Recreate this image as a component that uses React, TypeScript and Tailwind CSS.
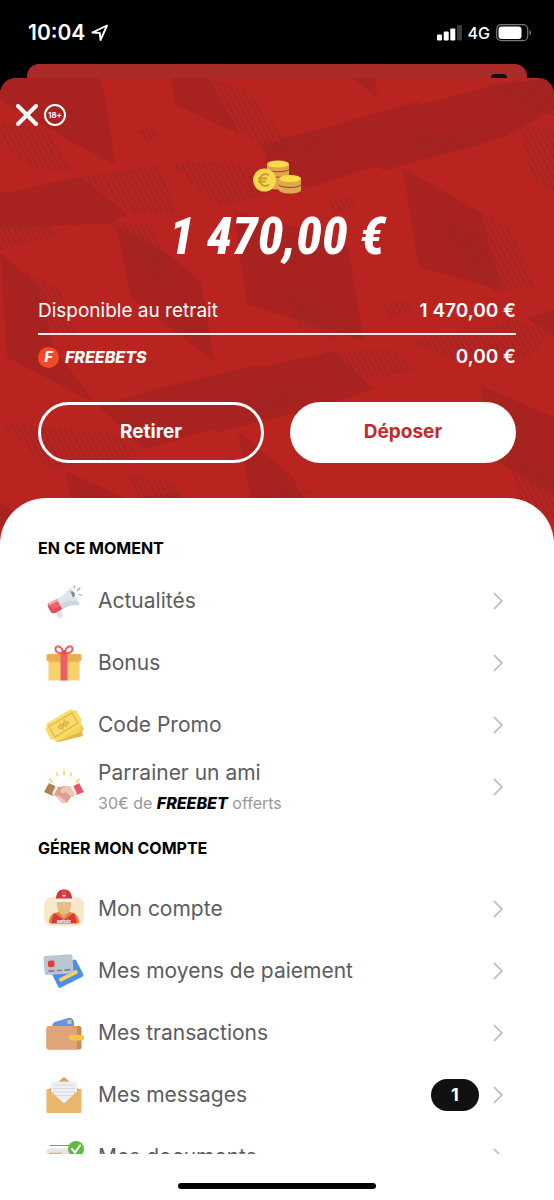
import type { ReactNode } from 'react';
import clsx from 'clsx';

interface MenuItem {
    label: string;
    icon: ReactNode;
    hint?: ReactNode;
    badge?: number;
}

interface MenuSection {
    title: string;
    items: MenuItem[];
}

function Icon({ children }: { children: ReactNode }) {
    return (
        <svg viewBox="0 0 40 40" className="h-10 w-10 shrink-0 overflow-visible" aria-hidden="true">
            {children}
        </svg>
    );
}

function MegaphoneIcon() {
    return (
        <Icon>
            <path d="M10 30l5.500-2.500 3 6.500a2.300 2.300 0 0 1-4.300 1.700z" fill="#d9e1ea" />
            <path d="M13 18C19 15 22 12 25 8c1-1.500 2.500-1 3 0l7 14c.7 1.400 0 2.500-1.500 2.300-6-.8-10 1-16 4.500z" fill="#dde4ec" />
            <path d="M15 23c8-3 12-4 18-3l2 2c.7 1.400 0 2.500-1.500 2.300-6-.8-10 1-16 4.500z" fill="#cdd6df" />
            <path d="M26.500 10.500c3-1.500 6 2.500 3.500 5l-1 1z" fill="#83898f" />
            <path d="M5 22l8-4 5 10-7 4c-1.500.8-3 .3-4-1l-3-5.500C3.300 24 3.500 23 5 22z" fill="#ec6470" />
            <path d="M4 24l1 4 3 4 4-.6 6-3.400-1.500-3-7 3.500z" fill="#df4c5b" />
            <path d="M5 22l8-4 1 2-9 5z" fill="#f3a7ac" />
            <path d="M30 7l.6-2M33.500 9.500L36 7M35 13.500l2.500.8" stroke="#99a7bd" strokeWidth="1.200" strokeLinecap="round" />
        </Icon>
    );
}

function GiftIcon() {
    return (
        <Icon>
            <path d="M4.500 16h31v20a1.500 1.500 0 0 1-1.500 1.500H6A1.500 1.500 0 0 1 4.500 36z" fill="#f9d16e" />
            <path d="M4.500 17h31v2.500h-31z" fill="#efbe5c" />
            <rect x="2.500" y="11" width="35" height="7" rx="1.500" fill="#e9b04f" />
            <path d="M16.500 11h7v26.500h-7z" fill="#ea6069" />
            <path d="M19 10C15 11 11 9 11.500 5.500 12 2 17 3 18.500 7l1 3M21 10c4 1 8-1 7.500-4.500C28 2 23 3 21.500 7l-1 3" fill="none" stroke="#e9606c" strokeWidth="2" />
            <rect x="17.500" y="7.500" width="5" height="4" rx="1" fill="#d94f5d" />
        </Icon>
    );
}

function TicketIcon() {
    return (
        <Icon>
            <path d="M6 28l25-10 9 5-2 4 1 4-24 6z" fill="#e2bd3f" />
            <path d="M4 26l31-11 4 9-2 3-24 10z" fill="#f4d45c" stroke="#dbb43b" strokeWidth=".6" />
            <path d="M2 19L27 4c1 1.500 3 2 5 1l6 10c-1.500 1-1.500 3-.5 5L12 36c-1-2-3-2-5-1L1 24c2-1 2-3 1-5z" fill="#f9dc6b" />
            <path d="M4.500 21.500L28 8l6 10-23 14z" fill="none" stroke="#e9b448" strokeWidth="1.300" />
            <path d="M15.500 18.500l8 3M20.500 14.500L18.500 25" stroke="#d9a238" strokeWidth="1.100" />
            <circle cx="16" cy="22" r="1.500" fill="none" stroke="#d9a238" />
            <circle cx="23" cy="18" r="1.500" fill="none" stroke="#d9a238" />
        </Icon>
    );
}

function HandshakeIcon() {
    return (
        <Icon>
            <path d="M5.500 12l2.500 3M12.500 6l1 3M20 4v4M27.500 6l-1 3M35 12l-2.500 3" stroke="#f5cf4b" strokeWidth="1.300" strokeLinecap="round" />
            <path d="M5 16l8 4-4 9-9-4z" fill="#b2804e" />
            <path d="M35 16l5 9-8 3-4-8z" fill="#ea5267" />
            <path d="M12 18l4 2-4 9-4-2z" fill="#eef0f4" />
            <path d="M29 18l-4 2 4 8 4-1z" fill="#eef0f4" />
            <path d="M14 20c4 0 5-1 8-1l7 8-4 6c-2 3-4 3.500-6 2l-9-7z" fill="#d9a48f" />
            <path d="M26 19c-4-1-7 1-9 4-1 2 0 3 2 3l3-1 6 5c2 0 3-1 2-4z" fill="#f1c5b3" />
            <path d="M12 29l2-1 8 6-2 2c-1 .6-2 .3-3-.5z" fill="#f1c5b3" />
        </Icon>
    );
}

function AccountIcon() {
    return (
        <Icon>
            <rect x="0" y="8" width="40" height="29" rx="8" fill="#fae7cb" />
            <path d="M5 34c0-7 3-10 10-11h10c7 1 10 4 10 11z" fill="#e57c35" />
            <path d="M10 24l10 7 10-7 3 10.500H7z" fill="#dc343c" />
            <path d="M14 22h12l-6 7.500z" fill="#dba970" />
            <path d="M13 10h14v7c0 5-3 8-7 8s-7-3-7-8z" fill="#e5bd86" />
            <path d="M12 10.500C12 3.500 15 .5 20 .5s8 3 8 10z" fill="#d8343b" />
            <path d="M18 1c1-.6 3-.6 4 0v7h-4z" fill="#e24b50" />
            <rect x="18.500" y="6" width="3" height="1.500" fill="#fff" />
            <rect x="11.500" y="9.500" width="17" height="3.500" rx="1.500" fill="#f3eeee" />
            <text x="20" y="33.500" textAnchor="middle" className="fill-white font-['Inter',sans-serif] text-[4px] font-black">
                Betclic
            </text>
        </Icon>
    );
}

function CardsIcon() {
    return (
        <Icon>
            <g transform="rotate(-27 24 24)">
                <rect x="10" y="13" width="28" height="19" rx="2" fill="#4f8fe3" />
                <rect x="14" y="23" width="20" height="4" rx="1" fill="#f7d166" />
            </g>
            <g transform="rotate(-4 15 13)">
                <rect x="0" y="4" width="29" height="19" rx="2" fill="#bbc6d3" />
                <rect x="4" y="9" width="6.500" height="6.500" rx="1.500" fill="#e8383f" />
                <path d="M4 19.500h6M12.500 19.500h5M20 19.500h6" stroke="#7d8791" strokeWidth="1.800" />
            </g>
        </Icon>
    );
}

function WalletIcon() {
    return (
        <Icon>
            <path d="M8 15c0-5 2-6 6-7l10-3c4-1 6 2 6 5v5z" fill="#6295e2" />
            <rect x="23.500" y="7" width="4" height="4" fill="#d7cb79" />
            <rect x="2.500" y="13" width="35" height="23.500" rx="2.500" fill="#c88a5d" />
            <path d="M5 13h26a2 2 0 0 1 2 2v19.500a2 2 0 0 1-2 2H5A2.500 2.500 0 0 1 2.500 34V15.500A2.500 2.500 0 0 1 5 13z" fill="#dfa577" />
            <rect x="25" y="22" width="15" height="5.500" rx="2" fill="#f5c641" />
        </Icon>
    );
}

function EnvelopeIcon() {
    return (
        <Icon>
            <path d="M20 2L3 16h34z" fill="#d99d57" />
            <path d="M7 6.500h26v18L20 34 7 24z" fill="#f0f1f5" />
            <path d="M9 10h22M9 13.500h22M9 17h22M11 20.500h18" stroke="#d5d8e0" strokeWidth="1" />
            <path d="M2.500 16c0-2 1-2.500 2.500-1.500l15 14 15-14c1.500-1 2.500-.5 2.500 1.500v20.500a1.500 1.500 0 0 1-1.500 1.500H4a1.500 1.500 0 0 1-1.500-1.500z" fill="#e9b66c" />
        </Icon>
    );
}

function DocumentsIcon() {
    return (
        <Icon>
            <path d="M5.500 8.500H27" stroke="#8b8b8f" strokeWidth="1" />
            <rect x="2.500" y="11.500" width="34" height="24" rx="3" fill="#e9e6e1" />
            <path d="M5 16.500h13" stroke="#f0ae5a" strokeWidth="1.500" />
            <circle cx="32" cy="12" r="8" fill="#5dbb3d" />
            <path d="M28 12l3 3.500 5-7" fill="none" stroke="#fff" strokeWidth="2" strokeLinecap="round" />
        </Icon>
    );
}

function CoinsIcon() {
    return (
        <svg viewBox="0 0 49 34" className="h-[34px] w-[49px]" aria-hidden="true">
            <path d="M14 4h22v22c0 2-5 3.500-11 3.500S14 28 14 26z" fill="#dba64d" />
            <ellipse cx="25" cy="4" rx="11" ry="3.500" fill="#fadc4b" />
            <path d="M14 9.500c3 3 19 3 22 0M14 15c3 3 19 3 22 0" fill="none" stroke="#a9372a" strokeWidth="1" />
            <path d="M26 18h22v12c0 2-5 3.500-11 3.500S26 32 26 30z" fill="#dfa94e" />
            <ellipse cx="37" cy="18.500" rx="11" ry="3.500" fill="#fadc4b" />
            <path d="M26 25c3 3.300 19 3.300 22 0" fill="none" stroke="#a9372a" strokeWidth="1" />
            <circle cx="11.500" cy="20" r="11.500" fill="#f8d84c" />
            <path d="M16 15.500c-4-3.500-9-.5-9 4.500s5 8 9 4.500M5 18.500h9M5 21.500h8" fill="none" stroke="#c99c34" strokeWidth="1.900" />
        </svg>
    );
}

const SECTIONS: MenuSection[] = [
    {
        title: 'EN CE MOMENT',
        items: [
            { label: 'Actualités', icon: <MegaphoneIcon /> },
            { label: 'Bonus', icon: <GiftIcon /> },
            { label: 'Code Promo', icon: <TicketIcon /> },
            {
                label: 'Parrainer un ami',
                icon: <HandshakeIcon />,
                hint: (
                    <>
                        30€ de <b className="font-extrabold text-black italic">FREEBET</b> offerts
                    </>
                ),
            },
        ],
    },
    {
        title: 'GÉRER MON COMPTE',
        items: [
            { label: 'Mon compte', icon: <AccountIcon /> },
            { label: 'Mes moyens de paiement', icon: <CardsIcon /> },
            { label: 'Mes transactions', icon: <WalletIcon /> },
            { label: 'Mes messages', icon: <EnvelopeIcon />, badge: 1 },
            { label: 'Mes documents', icon: <DocumentsIcon /> },
        ],
    },
];

const SHARDS = [
    '0,0 280,0 300,60 325,245 200,180 0,60',
    '485,0 590,0 680,160 495,75',
    '1000,0 1060,0 1070,60',
    '740,190 1180,68 1195,76 1400,20 1568,0 1568,90 1420,170 1085,262 1070,248 870,310 760,250',
    '0,318 20,325 230,280 360,385 320,410 0,425',
    '660,375 900,440 985,480 1030,745 830,680 700,640',
    '1140,255 1360,380 1420,600 1185,535',
    '330,420 480,500 570,580 605,800 370,620',
    '0,495 110,590 150,760 270,920 20,790',
    '280,930 440,880 730,812 740,818 940,775 1060,880 890,935 610,1002 600,992 410,1050',
    '1360,870 1568,960 1568,1180 1385,1070',
    '190,1115 360,1190 510,1170 525,1240 540,1358 220,1358',
    '675,1000 830,1130 920,1358 740,1358',
    '1490,680 1568,655 1568,730',
    '0,1200 110,1270 0,1270',
];

const HATCHES = [
    '0,126 130,146 210,266 100,256 0,186',
    '590,0 700,36 820,186 740,196 660,130',
    '225,280 450,246 500,380 380,385',
    '480,240 640,236 860,300 620,365',
    '740,190 880,146 940,186 850,231',
    '1380,16 1568,0 1568,106 1440,86',
    '1140,171 1300,146 1370,186 1200,232',
    '1470,136 1568,146 1568,326 1500,276',
    '0,416 120,411 170,446 0,486',
    '310,406 430,416 500,576 430,586',
    '60,546 170,596 220,736 130,706',
    '780,586 900,616 960,746 840,706',
    '1360,380 1440,420 1520,596 1420,600',
    '1230,396 1360,436 1420,616 1340,566',
    '1070,646 1130,626 1170,646 1110,681',
    '1160,746 1460,686 1568,720 1500,786 1300,806',
    '920,776 1100,766 1180,826 1010,856',
    '680,916 820,876 880,906 750,966',
    '0,976 330,1006 400,1066 140,1106',
    '380,146 430,141 460,161 420,186',
    '920,346 990,336 1010,356 950,386',
    '360,1120 500,1146 540,1276 440,1276',
    '780,1156 880,1166 920,1276 830,1276',
    '1430,1066 1568,1126 1568,1246 1480,1216',
];

function HeroPattern() {
    return (
        <svg
            viewBox="0 0 1568 1358"
            preserveAspectRatio="xMidYMin slice"
            className="absolute inset-0 h-full w-full"
            aria-hidden="true"
        >
            <defs>
                <pattern id="hatch" width="14" height="14" patternUnits="userSpaceOnUse" patternTransform="rotate(-28)">
                    <path d="M0 0h7v14H0z" fill="#9c2522" fillOpacity=".65" />
                </pattern>
            </defs>
            {SHARDS.map((points) => (
                <polygon key={points} points={points} fill="#a8221f" />
            ))}
            {HATCHES.map((points) => (
                <polygon key={points} points={points} fill="url(#hatch)" />
            ))}
        </svg>
    );
}

function StatusBar() {
    return (
        <div className="flex h-16 shrink-0 items-center justify-between pt-0.5 pr-[22px] pl-7 text-white">
            <div className="flex items-center gap-1.5">
                <span className="text-[21px] font-semibold">10:04</span>
                <svg viewBox="0 0 18 18" className="h-[18px] w-[18px]" aria-hidden="true">
                    <path d="M1.500 8.500L16 1.500 9.500 16 8.800 9z" fill="none" stroke="#fff" strokeWidth="1.900" strokeLinejoin="round" />
                </svg>
            </div>
            <div className="flex items-center gap-1.5">
                <svg viewBox="0 0 25 16" className="h-4 w-[25px]" aria-hidden="true">
                    <rect x="0" y="9.500" width="5" height="6" rx="1" fill="#fff" />
                    <rect x="6.700" y="6.500" width="5" height="9" rx="1" fill="#fff" />
                    <rect x="13.300" y="3.500" width="5" height="12" rx="1" fill="#fff" />
                    <rect x="20" y="0" width="5" height="15.500" rx="1" fill="#3b3b3b" />
                </svg>
                <span className="text-base leading-5 font-medium">4G</span>
                <svg viewBox="0 0 36 18" className="h-[18px] w-9" aria-hidden="true">
                    <rect x=".7" y=".7" width="31" height="16" rx="4.500" fill="none" stroke="#777" strokeWidth="1.200" />
                    <rect x="2.500" y="2.500" width="23" height="12.400" rx="3" fill="#fff" />
                    <path d="M33.500 6v5.500c2-1 2-4.500 0-5.500z" fill="#777" />
                </svg>
            </div>
        </div>
    );
}

function Hero() {
    return (
        <header className="relative px-[38px] pt-[25px] pb-[35px] text-white">
            <div className="-ml-[22px] flex h-6 items-center gap-1.5">
                <button type="button" aria-label="Fermer">
                    <svg viewBox="0 0 22 22" className="h-[22px] w-[22px]" aria-hidden="true">
                        <path d="M2 2l18 18M20 2L2 20" stroke="#fff" strokeWidth="4" strokeLinecap="round" />
                    </svg>
                </button>
                <span className="flex h-[22px] w-[22px] items-center justify-center rounded-full border-2 border-white text-[8px] font-bold">
                    18+
                </span>
            </div>

            <div className="mt-[33px] flex justify-center">
                <CoinsIcon />
            </div>
            <h1 className="mt-2 text-center font-['Roboto_Condensed','Liberation_Sans_Narrow','Roboto',sans-serif] text-[52px] leading-[70px] font-extrabold whitespace-nowrap italic">
                1 470,00 €
            </h1>

            <dl className="mt-[18px] text-[19px]">
                <div className="flex h-[45px] items-center justify-between border-b-2 border-white/90">
                    <dt>Disponible au retrait</dt>
                    <dd className="font-semibold">1 470,00 €</dd>
                </div>
                <div className="flex h-11 items-center justify-between">
                    <dt className="flex items-center gap-1.5 text-base font-extrabold italic">
                        <span className="flex h-[21px] w-[21px] items-center justify-center rounded-full bg-[#ee4b26] text-sm">F</span>
                        FREEBETS
                    </dt>
                    <dd className="font-semibold">0,00 €</dd>
                </div>
            </dl>

            <div className="mt-[23px] grid grid-cols-2 gap-[26px] text-[19px] font-bold">
                <button type="button" className="h-[61px] rounded-full border-[3px] border-white">
                    Retirer
                </button>
                <button type="button" className="h-[61px] rounded-full bg-white text-[#c52a2a]">
                    Déposer
                </button>
            </div>
        </header>
    );
}

function MenuRow({ item }: { item: MenuItem }) {
    return (
        <li>
            <a href="#" className="flex h-[62px] items-center gap-3.5 pr-[51px] pl-11">
                {item.icon}
                <span className="flex flex-1 flex-col">
                    <span className="text-[21px] leading-7 text-[#5c5c5e]">{item.label}</span>
                    {item.hint && <span className="pt-1 text-base leading-6 text-[#98989a]">{item.hint}</span>}
                </span>
                {item.badge && (
                    <span className="flex h-8 w-12 items-center justify-center rounded-full bg-[#111] text-lg font-bold text-white">
                        {item.badge}
                    </span>
                )}
                <svg viewBox="0 0 10 18" className="h-[18px] w-2.5 shrink-0" aria-hidden="true">
                    <path d="M1 1l8 8-8 8" fill="none" stroke="#c2c2c4" strokeWidth="1.800" />
                </svg>
            </a>
        </li>
    );
}

export default function App() {
    return (
        <div className="flex h-screen flex-col overflow-hidden bg-black font-['Inter',sans-serif]">
            <StatusBar />
            {/* Sheet underneath, only its top edge is visible */}
            <div className="mx-[27px] flex h-3.5 shrink-0 items-end justify-end overflow-hidden rounded-t-xl bg-[#a82b27] pr-5">
                <span className="h-1 w-4 rounded-t-full bg-[#151010]" />
            </div>

            <main className="relative flex min-h-0 flex-1 flex-col overflow-hidden rounded-t-2xl bg-[#b92421]">
                <div className="absolute inset-x-0 top-0 h-[480px]">
                    <HeroPattern />
                </div>
                <Hero />

                <div className="relative flex min-h-0 flex-1 flex-col rounded-t-[46px] bg-white pt-7">
                    <nav className="min-h-0 flex-1 overflow-hidden">
                        {SECTIONS.map((section, i) => (
                            <section key={section.title}>
                                <h2
                                    className={clsx(
                                        'flex h-11 items-center px-[38px] text-base font-bold text-black',
                                        i > 0 && 'my-2',
                                    )}
                                >
                                    {section.title}
                                </h2>
                                <ul>
                                    {section.items.map((item) => (
                                        <MenuRow key={item.label} item={item} />
                                    ))}
                                </ul>
                            </section>
                        ))}
                    </nav>
                    <div className="flex h-[46px] shrink-0 items-end justify-center pb-[11px]">
                        <span className="h-1.5 w-[198px] rounded-full bg-black" />
                    </div>
                </div>
            </main>
        </div>
    );
}
